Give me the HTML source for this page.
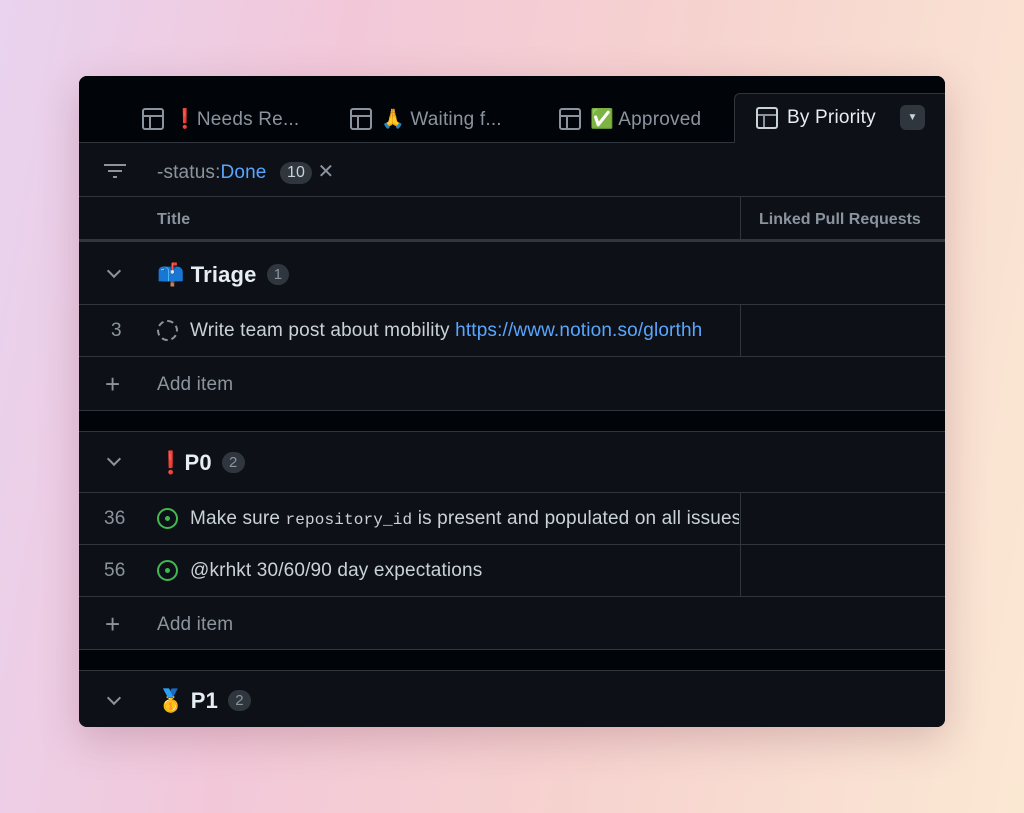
<!DOCTYPE html>
<html><head><meta charset="utf-8"><style>
*{box-sizing:border-box;margin:0;padding:0}
body{width:1024px;height:813px;overflow:hidden;font-family:"Liberation Sans","Noto Sans CJK JP",sans-serif;
background:linear-gradient(100deg,#e9d3ef 0%,#f2c8d9 30%,#f6d2cf 60%,#fbe8d3 100%);position:relative}
.card{position:absolute;left:79px;top:76px;width:866px;height:651px;border-radius:8px;background:#0d1117;overflow:hidden;box-shadow:0 12px 40px rgba(120,60,80,.25)}
.abs{position:absolute}
.tabs{left:0;top:0;width:866px;height:67px;background:#010409;border-bottom:1px solid #30363d}
.tab{position:absolute;top:31px;font-size:19px;color:#8b949e;display:flex;align-items:center;gap:9px;letter-spacing:0.2px}
.ti{width:22px;height:22px;border:2px solid #8b949e;border-radius:3px;position:relative}
.ti:before{content:"";position:absolute;left:0;right:0;top:5px;border-top:2px solid #8b949e}
.ti:after{content:"";position:absolute;top:5px;bottom:0;left:5px;border-left:2px solid #8b949e}
.active{left:655px;top:17px;width:220px;height:51px;background:#0d1117;border:1px solid #30363d;border-bottom:none;border-radius:6px 6px 0 0}
.row{position:absolute;left:0;width:866px;border-bottom:1px solid #30363d;background:#0d1117}
.gap{position:absolute;left:0;width:866px;background:#010409;border-bottom:1px solid #30363d}
.t{position:absolute;font-size:19px;color:#c9d1d9;white-space:nowrap;letter-spacing:0.15px}
.cnt{display:inline-block;background:#30363d;color:#8b949e;border-radius:11px;font-size:15px;padding:2px 7px;vertical-align:3px;margin-left:4px;font-weight:normal}
.vd{position:absolute;left:661px;top:0;bottom:0;border-left:1px solid #30363d}
.chev{position:absolute;left:30px;width:10px;height:10px;border-right:2px solid #8b949e;border-bottom:2px solid #8b949e;transform:rotate(45deg)}
.plus{position:absolute;left:26px;font-size:26px;color:#8b949e}
</style></head><body>
<div class="card">
 <div class="abs tabs"></div>
 <div class="abs active"></div>
 <div class="tab" style="left:63px"><span class="ti"></span><span><span style="color:#e5202e">❗</span>Needs Re...</span></div>
 <div class="tab" style="left:271px"><span class="ti"></span><span>🙏 Waiting f...</span></div>
 <div class="tab" style="left:480px"><span class="ti"></span><span>✅ Approved</span></div>
 <div class="tab" style="left:677px;color:#e6edf3"><span class="ti" style="border-color:#c9d1d9"></span><span>By Priority</span></div>
 <div class="abs" style="left:821px;top:29px;width:25px;height:25px;background:#30363d;border-radius:6px;color:#c9d1d9;font-size:10px;text-align:center;line-height:25px">▼</div>
 <div class="row" style="top:67px;height:54px">
  <div class="abs" style="left:25px;top:21px;width:22px;border-top:2px solid #8b949e"></div>
  <div class="abs" style="left:29px;top:27px;width:14px;border-top:2px solid #8b949e"></div>
  <div class="abs" style="left:34px;top:33px;width:4px;border-top:2px solid #8b949e"></div>
  <div class="t" style="left:78px;top:16px;color:#8b949e">-status:<span style="color:#58a6ff">Done</span> <span class="cnt" style="color:#c9d1d9;font-size:16px;vertical-align:1px;margin-left:8px">10</span> <span style="font-size:20px">✕</span></div>
 </div>
 <div class="row" style="top:121px;height:45px;border-bottom:3px solid #30363d">
  <div class="t" style="left:78px;top:14px;font-size:16px;font-weight:bold;color:#8b949e">Title</div>
  <div class="vd"></div>
  <div class="t" style="left:680px;top:14px;font-size:16px;font-weight:bold;color:#8b949e;letter-spacing:0">Linked Pull Requests</div>
 </div>
 <div class="row" style="top:172px;height:57px"><div class="chev" style="top:18px"></div><div class="t" style="left:78px;top:14px;font-size:22px;font-weight:bold;color:#e6edf3">📫 Triage <span class="cnt">1</span></div></div>
 <div class="row" style="top:229px;height:52px"><div class="t" style="left:32px;top:15px;color:#8b949e">3</div>
  <div class="abs" style="left:78px;top:15px;width:21px;height:21px;border:2px dashed #8b949e;border-radius:50%"></div>
  <div class="t" style="left:111px;top:15px;width:534px;overflow:hidden;color:#c9d1d9">Write team post about mobility <span style="color:#58a6ff">https://www.notion.so/glorthh</span></div><div class="vd"></div></div>
 <div class="row" style="top:281px;height:54px"><div class="plus" style="top:12px">+</div><div class="t" style="left:78px;top:17px;color:#8b949e">Add item</div></div>
 <div class="gap" style="top:335px;height:21px"></div>
 <div class="row" style="top:356px;height:61px"><div class="chev" style="top:22px"></div><div class="t" style="left:78px;top:18px;font-size:22px;font-weight:bold;color:#e6edf3"><span style="color:#e5202e">❗</span>P0 <span class="cnt">2</span></div></div>
 <div class="row" style="top:417px;height:52px"><div class="t" style="left:25px;top:15px;color:#8b949e">36</div>
  <div class="abs" style="left:78px;top:15px;width:21px;height:21px;border:2px solid #3fb950;border-radius:50%"><div class="abs" style="left:6px;top:6px;width:5px;height:5px;background:#3fb950;border-radius:50%"></div></div>
  <div class="t" style="left:111px;top:15px;width:549px;overflow:hidden">Make sure <span style="font-family:'Liberation Mono',monospace;font-size:16px">repository_id</span> is present and populated on all issues</div><div class="vd"></div></div>
 <div class="row" style="top:469px;height:52px"><div class="t" style="left:25px;top:15px;color:#8b949e">56</div>
  <div class="abs" style="left:78px;top:15px;width:21px;height:21px;border:2px solid #3fb950;border-radius:50%"><div class="abs" style="left:6px;top:6px;width:5px;height:5px;background:#3fb950;border-radius:50%"></div></div>
  <div class="t" style="left:111px;top:15px">@krhkt 30/60/90 day expectations</div><div class="vd"></div></div>
 <div class="row" style="top:521px;height:53px"><div class="plus" style="top:12px">+</div><div class="t" style="left:78px;top:17px;color:#8b949e">Add item</div></div>
 <div class="gap" style="top:574px;height:21px"></div>
 <div class="row" style="top:595px;height:60px;border:none"><div class="chev" style="top:22px"></div><div class="t" style="left:78px;top:17px;font-size:22px;font-weight:bold;color:#e6edf3">🥇 P1 <span class="cnt">2</span></div></div>
</div>
</body></html>
